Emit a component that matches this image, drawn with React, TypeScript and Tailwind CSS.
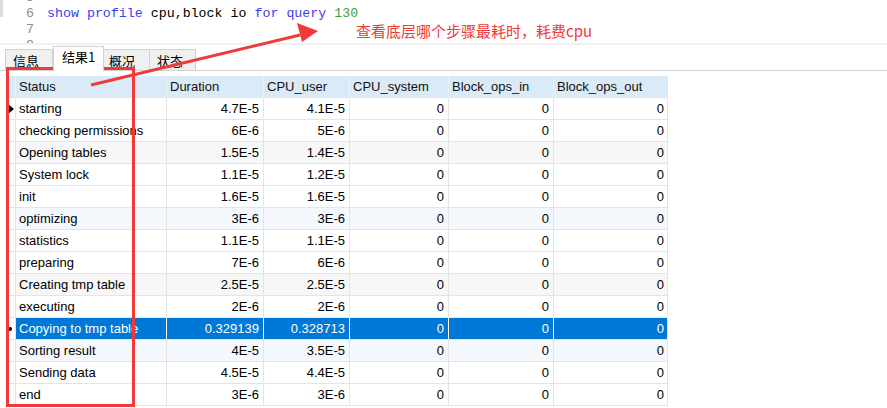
import React from "react";

type Row = { status: string; dur: string; user: string; sel?: boolean };

const rows: Row[] = [
  { status: "starting", dur: "4.7E-5", user: "4.1E-5" },
  { status: "checking permissions", dur: "6E-6", user: "5E-6" },
  { status: "Opening tables", dur: "1.5E-5", user: "1.4E-5" },
  { status: "System lock", dur: "1.1E-5", user: "1.2E-5" },
  { status: "init", dur: "1.6E-5", user: "1.6E-5" },
  { status: "optimizing", dur: "3E-6", user: "3E-6" },
  { status: "statistics", dur: "1.1E-5", user: "1.1E-5" },
  { status: "preparing", dur: "7E-6", user: "6E-6" },
  { status: "Creating tmp table", dur: "2.5E-5", user: "2.5E-5" },
  { status: "executing", dur: "2E-6", user: "2E-6" },
  { status: "Copying to tmp table", dur: "0.329139", user: "0.328713", sel: true },
  { status: "Sorting result", dur: "4E-5", user: "3.5E-5" },
  { status: "Sending data", dur: "4.5E-5", user: "4.4E-5" },
  { status: "end", dur: "3E-6", user: "3E-6" },
];

const rowBg = (i: number) => {
  if (i === 2 || i === 8) return "bg-[#f7f7f7]";
  if (i === 5 || i === 11) return "bg-[#f4f8fd]";
  return "bg-white";
};

export default function App() {
  return (
    <main className="relative w-[887px] h-[408px] overflow-hidden bg-white font-['Liberation_Sans','Noto_Sans_CJK_SC',sans-serif] text-[13px] text-black">
      {/* Editor */}
      <section className="flex h-[43px] overflow-hidden font-['Liberation_Mono',monospace] text-[13.3px]">
        <div className="w-[3px] shrink-0">
          <div className="h-[17px] bg-[#dcdcdc]" />
        </div>
        <div className="w-[31px] shrink-0 -mt-[10px] text-right text-[#8c8c8c] leading-4">
          <div>5</div>
          <div>6</div>
          <div>7</div>
          <div>8</div>
        </div>
        <div className="pl-[13px] -mt-[10px] leading-4 whitespace-pre">
          <div>&nbsp;</div>
          <div>
            <span className="text-[#3c3cf5]">show profile </span>
            <span>cpu,block io </span>
            <span className="text-[#3c3cf5]">for query </span>
            <span className="text-[#3fa03f]">130</span>
          </div>
          <div>&nbsp;</div>
        </div>
      </section>

      {/* Tab bar */}
      <div className="h-[2px] bg-[#f0f0f0]" />
      <nav className="flex items-end h-[26px] pl-[5px] border-b border-[#d2d2d2] font-['Noto_Sans_CJK_SC',sans-serif] text-[13px]">
        <div className="w-[48px] h-[22px] -mb-px pl-[7px] leading-[21px] bg-[#f0f0f0] border border-[#d2d2d2]">信息</div>
        <div className="w-[51px] h-[25px] -mb-px pl-[8px] leading-[20px] bg-white border border-b-0 border-[#d2d2d2] relative z-10">
          结果1
        </div>
        <div className="w-[46px] h-[22px] -mb-px pl-[5px] leading-[21px] bg-[#f0f0f0] border border-l-0 border-[#d2d2d2]">概况</div>
        <div className="w-[46px] h-[22px] -mb-px pl-[7px] leading-[21px] bg-[#f0f0f0] border border-l-0 border-[#d2d2d2]">状态</div>
      </nav>

      {/* Grid */}
      <div className="pt-[5px] pl-[7px]">
        <div className="w-[661px] border-r border-[#e4e4e4]">
          <div className="flex h-[22px] bg-[#dbeaf7] leading-[21px] border-b border-[#e4e4e4] text-[#111]">
            <div className="w-[9px] border-r border-[#eaf2fb]" />
            <div className="w-[151px] pl-[3px] border-r border-[#eaf2fb]">Status</div>
            <div className="w-[97px] pl-[3px] border-r border-[#eaf2fb]">Duration</div>
            <div className="w-[86px] pl-[3px] border-r border-[#eaf2fb]">CPU_user</div>
            <div className="w-[99px] pl-[3px] border-r border-[#eaf2fb]">CPU_system</div>
            <div className="w-[105px] pl-[3px] border-r border-[#eaf2fb]">Block_ops_in</div>
            <div className="w-[113px] pl-[3px]">Block_ops_out</div>
          </div>
          {rows.map((r, i) => {
            const cell = r.sel
              ? "bg-[#0078d7] text-white border-r border-white"
              : `${rowBg(i)} border-r border-[#e4e4e4]`;
            return (
              <div key={r.status} className="flex h-[22px] leading-[21px] border-b border-[#e4e4e4]">
                <div className="w-[9px] bg-white border-r border-[#e4e4e4] flex items-center">
                  {i === 0 && (
                    <svg width="6" height="10" viewBox="0 0 6 10" className="ml-[1px]">
                      <polygon points="0,0 6,5 0,10" fill="#000" />
                    </svg>
                  )}
                  {r.sel && <span className="ml-[1px] w-[4px] h-[4px] rounded-full bg-black" />}
                </div>
                <div className={`w-[151px] pl-[3px] whitespace-nowrap ${cell}`}>{r.status}</div>
                <div className={`w-[97px] pr-[4px] text-right ${cell}`}>{r.dur}</div>
                <div className={`w-[86px] pr-[4px] text-right ${cell}`}>{r.user}</div>
                <div className={`w-[99px] pr-[4px] text-right ${cell}`}>0</div>
                <div className={`w-[105px] pr-[4px] text-right ${cell}`}>0</div>
                <div
                  className={`w-[113px] pr-[3px] text-right ${
                    r.sel ? "bg-[#0078d7] text-white" : rowBg(i)
                  }`}
                >
                  0
                </div>
              </div>
            );
          })}
        </div>
      </div>

      {/* Annotation overlay */}
      <div className="absolute left-[6px] top-[67px] w-[129px] h-[340px] border-[3px] border-[#f03a3a] pointer-events-none" />
      <svg className="absolute inset-0 pointer-events-none" width="887" height="408">
        <line x1="91" y1="85" x2="300" y2="35" stroke="#f03a3a" strokeWidth="3" />
        <polygon points="318,31 297,23 302,42" fill="#f03a3a" />
      </svg>
      <div className="absolute left-[356px] top-[21px] text-[15px] leading-[20px] text-[#f03a3a] font-['Noto_Sans_CJK_SC',sans-serif]">
        查看底层哪个步骤最耗时，耗费cpu
      </div>
    </main>
  );
}
